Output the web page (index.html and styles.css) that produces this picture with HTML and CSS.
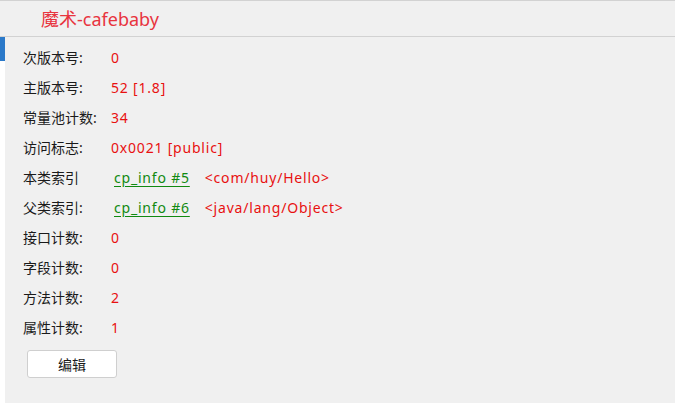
FILE: index.html
```html
<!DOCTYPE html>
<html lang="zh-CN">
<head>
<meta charset="utf-8">
<title>魔术-cafebaby</title>
<link rel="stylesheet" href="styles.css">
</head>
<body>
<div class="header"><span class="title">魔术-cafebaby</span></div>
<div class="main">
  <div class="sidebar"><div class="marker"></div></div>
  <div class="panel">
    <div class="row"><span class="label">次版本号:</span><span class="value">0</span></div>
    <div class="row"><span class="label">主版本号:</span><span class="value">52 [1.8]</span></div>
    <div class="row"><span class="label">常量池计数:</span><span class="value">34</span></div>
    <div class="row"><span class="label">访问标志:</span><span class="value">0x0021 [public]</span></div>
    <div class="row"><span class="label">本类索引</span><a class="link">cp_info #5</a><span class="value ref">&lt;com/huy/Hello&gt;</span></div>
    <div class="row"><span class="label">父类索引:</span><a class="link">cp_info #6</a><span class="value ref">&lt;java/lang/Object&gt;</span></div>
    <div class="row"><span class="label">接口计数:</span><span class="value">0</span></div>
    <div class="row"><span class="label">字段计数:</span><span class="value">0</span></div>
    <div class="row"><span class="label">方法计数:</span><span class="value">2</span></div>
    <div class="row"><span class="label">属性计数:</span><span class="value">1</span></div>
    <button class="btn">编辑</button>
  </div>
</div>
</body>
</html>
```
FILE: styles.css
```css
html, body {
  margin: 0;
  padding: 0;
  background: #ffffff;
  height: 100%;
}
body {
  font-family: "Noto Sans", "Noto Sans CJK SC", sans-serif;
  font-size: 14px;
  color: #1a1a1a;
  display: flex;
  flex-direction: column;
}
.header {
  height: 35px;
  border-top: 1px solid #d2d2d2;
  border-bottom: 1px solid #d2d2d2;
  background: #f0f0f0;
  display: flex;
  align-items: center;
  padding-left: 41px;
}
.title {
  color: #e8343e;
  font-size: 18px;
  line-height: 24px;
}
.main {
  flex: 1;
  display: flex;
}
.sidebar {
  width: 5px;
  background: #ffffff;
}
.marker {
  height: 24px;
  background: #2b79c9;
}
.panel {
  flex: 1;
  background: #f0f0f0;
  padding: 5px 0 0 18px;
}
.row {
  height: 30px;
  display: flex;
  align-items: center;
  white-space: nowrap;
}
.label {
  width: 88px;
  flex: none;
}
.value {
  color: #e81010;
  letter-spacing: 0.8px;
}
.link {
  color: #108a10;
  letter-spacing: 0.8px;
  text-decoration: underline;
  text-underline-offset: 3px;
  margin-left: 3px;
  margin-right: 15px;
}
.btn {
  margin: 8px 0 0 4px;
  width: 90px;
  height: 28px;
  background: #ffffff;
  border: 1px solid #cfcfcf;
  border-radius: 3px;
  font-family: "Noto Sans", "Noto Sans CJK SC", sans-serif;
  font-size: 14px;
  color: #1a1a1a;
  padding: 0;
}
```
